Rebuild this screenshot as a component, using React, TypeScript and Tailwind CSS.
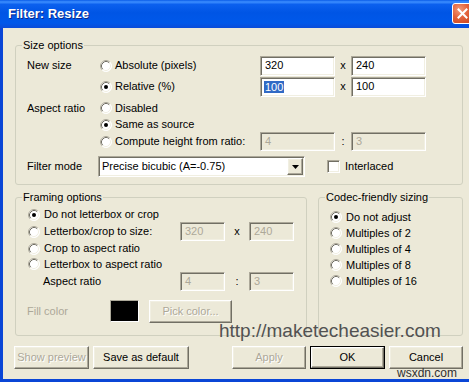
import React from "react";

const SUNKEN =
  "border border-t-[#ACA899] border-l-[#ACA899] border-b-white border-r-white shadow-[inset_1px_1px_0_#716F64,inset_-1px_-1px_0_#F1EFE2]";
const RAISED =
  "border border-t-white border-l-white border-b-[#716F64] border-r-[#716F64] shadow-[inset_-1px_-1px_0_#ACA899,inset_1px_1px_0_#F1EFE2] bg-[#ECE9D8]";

function Radio({ checked = false }: { checked?: boolean }) {
  return (
    <svg width="12" height="12" viewBox="0 0 12 12" className="shrink-0 mr-[4px]">
      <circle cx="6" cy="6" r="5.5" fill="#fff" />
      <path d="M2.11 9.89 A5.5 5.5 0 0 1 9.89 2.11" fill="none" stroke="#ACA899" strokeWidth="1" />
      <path d="M2.82 9.18 A4.5 4.5 0 0 1 9.18 2.82" fill="none" stroke="#716F64" strokeWidth="1" />
      <path d="M9.89 2.11 A5.5 5.5 0 0 1 2.11 9.89" fill="none" stroke="#fff" strokeWidth="1" />
      <path d="M9.18 2.82 A4.5 4.5 0 0 1 2.82 9.18" fill="none" stroke="#F1EFE2" strokeWidth="1" />
      {checked && <circle cx="6" cy="6" r="2" fill="#000" />}
    </svg>
  );
}

function Field({
  w,
  h,
  value,
  disabled = false,
  selected = false,
}: {
  w: string;
  h: string;
  value: string;
  disabled?: boolean;
  selected?: boolean;
}) {
  return (
    <div
      className={`${SUNKEN} ${w} ${h} flex items-center pl-[4px] ${
        disabled ? "bg-[#ECE9D8] text-[#ACA899]" : "bg-white text-black"
      }`}
    >
      {selected ? (
        <span className="bg-[#316AC5] text-white leading-[12px] px-[1px] -ml-[1px]">{value}</span>
      ) : (
        <span>{value}</span>
      )}
    </div>
  );
}

function Btn({
  label,
  w,
  disabled = false,
  def = false,
}: {
  label: string;
  w: string;
  disabled?: boolean;
  def?: boolean;
}) {
  const inner = (
    <div
      className={`${RAISED} h-full w-full flex items-center justify-center ${
        disabled ? "text-[#ACA899] [text-shadow:1px_1px_0_#ffffff]" : "text-black"
      }`}
    >
      {label}
    </div>
  );
  if (def) {
    return <div className={`${w} h-[23px] border border-black`}>{inner}</div>;
  }
  return <div className={`${w} h-[23px]`}>{inner}</div>;
}

function Group({
  label,
  className,
  children,
}: {
  label: string;
  className: string;
  children: React.ReactNode;
}) {
  return (
    <div className={`relative border border-[#D0D0BF] rounded-[3px] ${className}`}>
      <span className="absolute -top-[7px] left-[6px] px-[1px] bg-[#ECE9D8] leading-[13px] text-black">
        {label}
      </span>
      {children}
    </div>
  );
}

export default function App() {
  return (
    <div className="relative w-[469px] h-[382px] overflow-hidden bg-[#0A46D6] flex flex-col font-['Liberation_Sans',Arial,sans-serif] text-[11px] text-black">
      {/* Title bar */}
      <div className="h-[28px] shrink-0 flex items-center pl-[8px] bg-[linear-gradient(180deg,#0A5CE8_0%,#3D8FFF_7%,#0B60EE_16%,#0055E5_45%,#0058EA_82%,#0A4CD9_100%)]">
        <span className="text-white font-bold text-[13px] leading-[16px] [text-shadow:1px_1px_0_#0A2A8A]">
          Filter: Resize
        </span>
        <div className="ml-auto -mr-[4px] -mt-[1px] w-[21px] h-[21px] rounded-[3px] border border-white bg-[radial-gradient(circle_at_35%_30%,#F29A7A_0%,#E2623C_45%,#C84219_100%)] flex items-center justify-center">
          <svg width="11" height="11" viewBox="0 0 11 11">
            <path d="M1.5 1.5 L9.5 9.5 M9.5 1.5 L1.5 9.5" stroke="#fff" strokeWidth="2" strokeLinecap="square" />
          </svg>
        </div>
      </div>

      {/* Body */}
      <div className="ml-[3px] h-[351px] shrink-0 bg-[#ECE9D8] pl-[12px] pt-[17px] flex flex-col">
        {/* Size options */}
        <Group label="Size options" className="w-[448px] h-[140px] shrink-0">
          <div className="pl-[11px] pt-[9px] flex flex-col">
            <div className="flex items-center h-[21px]">
              <span className="w-[73px]">New size</span>
              <div className="w-[160px] flex items-center">
                <Radio />
                <span className="ml-[-1px]">Absolute (pixels)</span>
              </div>
              <Field w="w-[75px]" h="h-[20px]" value="320" />
              <span className="w-[16px] text-center">x</span>
              <Field w="w-[75px]" h="h-[20px]" value="240" />
            </div>
            <div className="flex items-center h-[21px]">
              <span className="w-[73px]"></span>
              <div className="w-[160px] flex items-center">
                <Radio checked />
                <span className="ml-[-1px]">Relative (%)</span>
              </div>
              <Field w="w-[75px]" h="h-[20px]" value="100" selected />
              <span className="w-[16px] text-center">x</span>
              <Field w="w-[75px]" h="h-[20px]" value="100" />
            </div>
            <div className="flex items-center h-[18px] mt-[2px]">
              <span className="w-[73px]">Aspect ratio</span>
              <div className="flex items-center">
                <Radio />
                <span className="ml-[-1px]">Disabled</span>
              </div>
            </div>
            <div className="flex items-center h-[15px]">
              <span className="w-[73px]"></span>
              <div className="flex items-center">
                <Radio checked />
                <span className="ml-[-1px]">Same as source</span>
              </div>
            </div>
            <div className="flex items-center h-[19px]">
              <span className="w-[73px]"></span>
              <div className="w-[160px] flex items-center">
                <Radio />
                <span className="ml-[-1px]">Compute height from ratio:</span>
              </div>
              <Field w="w-[75px]" h="h-[19px]" value="4" disabled />
              <span className="w-[16px] text-center">:</span>
              <Field w="w-[75px]" h="h-[19px]" value="3" disabled />
            </div>
            <div className="flex items-center h-[21px] mt-[5px]">
              <span className="w-[71px]">Filter mode</span>
              <div className={`${SUNKEN} w-[207px] h-[21px] bg-white flex items-center`}>
                <span className="flex-1 pl-[3px]">Precise bicubic (A=-0.75)</span>
                <div className={`${RAISED} w-[16px] h-[17px] mr-[1px] flex items-center justify-center`}>
                  <svg width="7" height="4" viewBox="0 0 7 4">
                    <path d="M0 0 H7 L3.5 4 Z" fill="#000" />
                  </svg>
                </div>
              </div>
              <div className={`${SUNKEN} w-[13px] h-[13px] bg-white ml-[22px] mr-[5px]`}></div>
              <span>Interlaced</span>
            </div>
          </div>
        </Group>

        {/* Lower groups */}
        <div className="flex gap-[11px] mt-[12px]">
          <Group label="Framing options" className="w-[292px] h-[139px] shrink-0">
            <div className="pl-[12px] pt-[9px] flex flex-col">
              <div className="flex items-center h-[15px]">
                <Radio checked />
                <span>Do not letterbox or crop</span>
              </div>
              <div className="flex items-center h-[19px]">
                <div className="w-[152px] flex items-center">
                  <Radio />
                  <span>Letterbox/crop to size:</span>
                </div>
                <Field w="w-[45px]" h="h-[19px]" value="320" disabled />
                <span className="w-[24px] text-center">x</span>
                <Field w="w-[45px]" h="h-[19px]" value="240" disabled />
              </div>
              <div className="flex items-center h-[15px]">
                <Radio />
                <span>Crop to aspect ratio</span>
              </div>
              <div className="flex items-center h-[16px]">
                <Radio />
                <span>Letterbox to aspect ratio</span>
              </div>
              <div className="flex items-center h-[19px]">
                <span className="w-[152px] pl-[15px]">Aspect ratio</span>
                <Field w="w-[45px]" h="h-[19px]" value="4" disabled />
                <span className="w-[24px] text-center">:</span>
                <Field w="w-[45px]" h="h-[19px]" value="3" disabled />
              </div>
              <div className="flex items-center h-[22px] mt-[9px] -ml-[1px]">
                <span className="w-[83px] text-[#ACA899]">Fill color</span>
                <div className="w-[29px] h-[22px] border border-t-[#ACA899] border-l-[#ACA899] border-b-white border-r-white bg-black"></div>
                <div className="ml-[10px]">
                  <Btn label="Pick color..." w="w-[83px]" disabled />
                </div>
              </div>
            </div>
          </Group>

          <Group label="Codec-friendly sizing" className="w-[145px] h-[139px] shrink-0">
            <div className="pl-[11px] pt-[11px] flex flex-col">
              {["Do not adjust", "Multiples of 2", "Multiples of 4", "Multiples of 8", "Multiples of 16"].map(
                (t, i) => (
                  <div key={t} className="flex items-center h-[16px]">
                    <Radio checked={i === 0} />
                    <span>{t}</span>
                  </div>
                )
              )}
            </div>
          </Group>
        </div>

        {/* Buttons */}
        <div className="flex items-center mt-[10px] -ml-[1px] mr-[6px]">
          <Btn label="Show preview" w="w-[75px]" disabled />
          <div className="ml-[4px]">
            <Btn label="Save as default" w="w-[96px]" />
          </div>
          <div className="ml-auto flex gap-[4px]">
            <Btn label="Apply" w="w-[74px]" disabled />
            <Btn label="OK" w="w-[75px]" def />
            <Btn label="Cancel" w="w-[74px]" />
          </div>
        </div>
      </div>

      {/* Watermarks */}
      <span className="absolute left-[219px] top-[321px] text-[19px] leading-[19px] text-[#525252] whitespace-nowrap">
        http://maketecheasier.com
      </span>
      <span className="absolute left-[397px] top-[367px] text-[12px] leading-[12px] text-[#303030] whitespace-nowrap">
        wsxdn.com
      </span>
    </div>
  );
}
